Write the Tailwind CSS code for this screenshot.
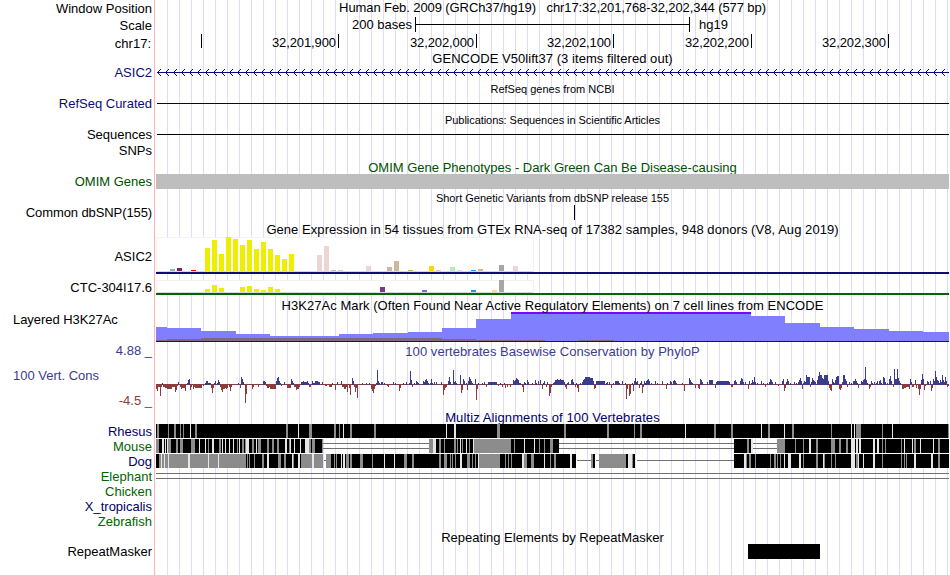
<!DOCTYPE html>
<html lang="en">
<head>
    <meta charset="UTF-8" />
    <meta name="viewport" content="width=device-width, initial-scale=1.0" />
    <title>Human chr17:32,201,768-32,202,344 Genome Browser</title>
    <script src="https://cdn.jsdelivr.net/npm/@tailwindcss/browser@4"></script>
</head>
<body class="bg-white text-black font-['Liberation_Sans',Arial,sans-serif] text-[13px] leading-4 overflow-hidden">
    <div class="flex w-[950px] h-[575px] overflow-hidden whitespace-pre">

        <!-- Track labels -->
        <div class="flex flex-col w-[155px] shrink-0 border-r border-[#ffb4b4] pt-px pr-[2px] text-right">
            <div>Window Position</div>
            <div class="mt-px">Scale</div>
            <div class="mt-[2px] pr-px">chr17:</div>
            <div class="mt-[13px] text-[#0c0c78]">ASIC2</div>
            <div class="mt-[15px] text-[#0c0c78]">RefSeq Curated</div>
            <div class="mt-[15px]">Sequences</div>
            <div>SNPs</div>
            <div class="mt-[15px] text-[#005000]">OMIM Genes</div>
            <div class="mt-[15px] tracking-[-0.1px]">Common dbSNP(155)</div>
            <div class="mt-[28px]">ASIC2</div>
            <div class="mt-[15px]">CTC-304I17.6</div>
            <div class="mt-[16px] pl-[13px] text-left tracking-[-0.05px]">Layered H3K27Ac</div>
            <div class="mt-[15px] text-[#3c3c8c]">4.88 _</div>
            <div class="mt-[9px] pl-[13px] text-left text-[#3c3c8c]">100 Vert. Cons</div>
            <div class="mt-[9px] text-[#8c3c3c]">-4.5 _</div>
            <div class="flex flex-col mt-[15px] leading-[15px]">
                <div class="text-[#000064]">Rhesus</div>
                <div class="text-[#006400]">Mouse</div>
                <div class="text-[#000064]">Dog</div>
                <div class="text-[#006400]">Elephant</div>
                <div class="text-[#006400]">Chicken</div>
                <div class="text-[#000064]">X_tropicalis</div>
                <div class="text-[#006400]">Zebrafish</div>
            </div>
            <div class="mt-[15px]">RepeatMasker</div>
        </div>

        <!-- Tracks, with a guide line every 12px -->
        <div class="flex flex-col w-[793px] ml-px shrink-0 text-center bg-[repeating-linear-gradient(to_right,transparent_0_11px,#dcdcff_11px_12px)]">
            <div class="h-4 tracking-[-0.09px]">Human Feb. 2009 (GRCh37/hg19)   chr17:32,201,768-32,202,344 (577 bp)</div>

            <!-- Scale -->
            <div class="flex h-[17px] pt-px text-left">
                <div class="w-[256px] text-right">200 bases</div>
                <div class="flex items-center w-[275px] h-[15px] ml-[3px] border-x border-black"><div class="w-full h-px bg-black"></div></div>
                <div class="ml-[9px]">hg19</div>
            </div>

            <!-- Ruler -->
            <div class="flex h-[18px] pt-px text-right leading-[18px] tracking-[-0.1px]">
                <div class="w-[46px] h-[14px] border-r border-black"></div>
                <div class="w-[137px] h-[14px] border-r border-black pr-[2px]">32,201,900</div>
                <div class="w-[138px] h-[14px] border-r border-black pr-[2px]">32,202,000</div>
                <div class="w-[137px] h-[14px] border-r border-black pr-[2px]">32,202,100</div>
                <div class="w-[138px] h-[14px] border-r border-black pr-[2px]">32,202,200</div>
                <div class="w-[137px] h-[14px] border-r border-black pr-[2px]">32,202,300</div>
            </div>

            <!-- GENCODE -->
            <div class="h-[15px] tracking-[0.05px]">GENCODE V50lift37 (3 items filtered out)</div>
            <svg class="h-[13px] w-[793px] shrink-0" viewBox="156 66 793 13" shape-rendering="crispEdges">
                <path id="chevrons" fill="#0c0c78" d="M157 72h792v1h-792z" />
            </svg>

            <!-- RefSeq -->
            <div class="mt-[2px] h-[22px] text-[11px]">RefSeq genes from NCBI</div>
            <div class="ml-px h-px shrink-0 bg-[#000050]"></div>

            <!-- Publications -->
            <div class="mt-2 h-[22px] text-[11px] tracking-[-0.06px]">Publications: Sequences in Scientific Articles</div>
            <div class="ml-px h-px shrink-0 bg-black"></div>

            <!-- OMIM -->
            <div class="mt-[25px] h-[14px] text-[#005000]">OMIM Gene Phenotypes - Dark Green Can Be Disease-causing</div>
            <div class="relative h-[15px] shrink-0 bg-[#bebebe]"></div>

            <!-- dbSNP -->
            <div class="mt-px h-[15px] text-[11px]">Short Genetic Variants from dbSNP release 155</div>
            <div class="ml-[418px] w-px h-[15px] shrink-0 bg-black"></div>

            <!-- GTEx -->
            <div class="mt-[2px] h-[15px] tracking-[0.055px]">Gene Expression in 54 tissues from GTEx RNA-seq of 17382 samples, 948 donors (V8, Aug 2019)</div>
            <svg id="gtex" class="h-[60px] w-[793px] shrink-0" viewBox="156 237 793 60" shape-rendering="crispEdges">
                <path fill="#fff" stroke="#f2f2f2" d="M156.5 237.5h377v34h-377zM156.5 280.5h377v12h-377z" />
                <path fill="#d9d9d9" d="M157 271h376v1h-376zM157 292h376v1h-376z" />
                <path fill="#0c0c78" d="M156 272h793v2h-793z" />
                <path fill="#006400" d="M156 293h793v2h-793z" />
            </svg>

            <!-- H3K27Ac -->
            <div class="relative mt-px h-[14px] tracking-[0.05px]">H3K27Ac Mark (Often Found Near Active Regulatory Elements) on 7 cell lines from ENCODE</div>
            <svg class="h-[32px] w-[793px] shrink-0" viewBox="156 312 793 32" shape-rendering="crispEdges">
                <path fill="#8080ff" d="M156 341V327H167V328H201V331H236V334H270V336H339V334H373V333H408V332H442V328H476V319H511V313H751V316H785V323H820V327H854V329H889V331H923V332H949V341z" />
                <path fill="#7f00ff" d="M511 312h240v2h-240z" />
                <path fill="#806680" d="M156 341V340H167V339H201V338H442V339H476V340H545V341zM579 340h35v1h-35z" />
                <path fill="#1c1450" d="M156 341h793v1h-793z" />
            </svg>

            <!-- Conservation -->
            <div class="h-4 text-[#3c3c8c] tracking-[0.05px]">100 vertebrates Basewise Conservation by PhyloP</div>
            <svg id="phylop" class="h-[50px] w-[793px] shrink-0" viewBox="156 360 793 50" shape-rendering="crispEdges"></svg>
            <div class="h-[14px] text-[#000064] tracking-[0.1px]">Multiz Alignments of 100 Vertebrates</div>
            <svg id="multiz" class="h-[60px] w-[793px] shrink-0" viewBox="156 424 793 60" shape-rendering="crispEdges"></svg>

            <!-- RepeatMasker -->
            <div class="mt-[46px] h-[14px]">Repeating Elements by RepeatMasker</div>
            <div class="ml-[592px] w-[72px] h-[15px] shrink-0 bg-black"></div>
        </div>
    </div>

    <script>
        function addPath(svg, fill, d) {
            const path = document.createElementNS('http://www.w3.org/2000/svg', 'path');
            path.setAttribute('fill', fill);
            path.setAttribute('d', d);
            svg.appendChild(path);
        }

        const rect = (x, y, w, h) => `M${x} ${y}h${w}v${h}h${-w}z`;

        // strand arrows on the gene line
        const chevrons = document.getElementById('chevrons');
        let arrows = chevrons.getAttribute('d');
        for (let x = 157; x < 946; x += 8) {
            arrows += rect(x + 1, 71, 1, 1) + rect(x + 2, 70, 1, 1) + rect(x + 3, 69, 1, 1);
            arrows += rect(x + 1, 73, 1, 1) + rect(x + 2, 74, 1, 1) + rect(x + 3, 75, 1, 1);
        }
        chevrons.setAttribute('d', arrows);

        // expression bars: x, top, colour
        const gtex = document.getElementById('gtex');
        const asic2 = [
            [170, 269, '#8fbc8f'], [177, 268, '#8b1c62'], [191, 270, '#ff0000'],
            [317, 255, '#eed5d2'], [324, 246, '#eed5d2'], [331, 270, '#cdb79e'], [338, 270, '#eec591'],
            [366, 266, '#eed5d2'], [387, 267, '#cdb79e'], [394, 261, '#cdb79e'], [408, 270, '#9acd32'],
            [429, 266, '#ffd700'], [436, 270, '#ffb6c1'], [450, 267, '#b4eeb4'], [457, 270, '#d9d9d9'],
            [471, 270, '#1e90ff'], [478, 269, '#cdb79e'], [499, 265, '#a6a6a6'], [513, 266, '#eed5d2']
        ];
        [248, 240, 254, 237, 239, 245, 240, 249, 242, 249, 255, 259, 254].forEach((top, i) => {
            asic2.push([205 + 7 * i, top, '#eeee00']);
        });
        const ctc = [
            [205, 289, '#eeee00'], [212, 285, '#eeee00'], [219, 288, '#eeee00'], [240, 287, '#eeee00'],
            [247, 286, '#eeee00'], [254, 289, '#eeee00'], [261, 290, '#eeee00'], [268, 287, '#eeee00'],
            [275, 289, '#eeee00'], [380, 287, '#7a378b'], [422, 290, '#7a67ee'], [471, 290, '#1e90ff'],
            [492, 290, '#ffd39b'], [499, 280, '#a6a6a6']
        ];
        asic2.forEach(([x, top, fill]) => addPath(gtex, fill, rect(x, top, 5, 271 - top)));
        ctc.forEach(([x, top, fill]) => addPath(gtex, fill, rect(x, top, 5, 292 - top)));

        // PhyloP scores as column:height or first-last:height
        const scores = `
            156:-5 157:-7 158-159:-3 160:-12 161:-3 162:2 163-164:-3 165-166:-4 167-171:-5 172-174:-3 175:-8 176:-6 177:-2 178:3
            180:-3 181:-5 182-184:-4 185:-7 187:2 188:5 189:6 190:-6 191:-3 193:-5 194:-3 195-201:-4 203:-2 205:2 206-207:4 208-210:2
            211:-4 212:-9 213:-4 214:2 215:4 217:2 218:5 219:3 220:-3 221:-6 222:-8 223-224:-5 225:-4 226:-5 227:-4 229:-3 230:-7 231:-3
            238:2 240:-4 241:8 242:6 243:3 245:-19 246:-10 252:-5 253:-3 258:-3 263-264:4 265:3 266:-2 267-268:-4 269:-3 270-275:-5
            276:4 277:7 278:8 279:4 280:2 281:-2 284:3 287-290:-4 291:6 292:4 293:2 294:-3 295:-3 296:-6 297-298:-5 299:-3
            301-302:3 303:4 304-306:3 307:4 308:2 309:-3 310:-3 312:4 313:2 314:2 315-317:4 318-319:3 322:3 325-326:-2 329-331:-3
            332:2 335:-6 337:3 341:4 342-343:-3 344-345:-5 346:-3 347:-8 349:-4 350:-11 352:7 353:4 354:-3 355:-8 356:-4 357:-14
            362:2 366:2 369:2 371:-5 372:-7 373:-9 374:-5 375:-2 376:2 377:15 378:4 379:2 381:3 382:3 384:2 387:-2 388:-3 393:3
            395:2 399:-7 400:-4 403:2 406:3 409:2 410:14 411:5 412:-3 414:2 416:4 417:3 418:2 423:4 424:3 425:5 426:6 427:4 428:2
            430-432:2 431:6 434:3 436:3 441:3 443:-11 444:-6 445:-4 446:-3 448:4 449:8 450:3 453:15 454:3 455:4 456:2 460:10
            461:-9 462:-6 463:6 464:4 466:2 467:-6 468:4 469:8 470:6 471:4 472:2 475:6 476:-16 477:-5 478:2 482:2 484:3 486:-3
            488-496:3 498:-2 500:2 502:-3 504:2 505:-4 507:-3 510:-3 513:5 514:4 515:5 516:7 517:6 518:5 519:2 520:2 522:-3
            523:-8 524:3 525:2 527:5 528:3 532:2 535:5 536:2 538:4 540:5 542:-5 543:2 544:4 546:-3 547:3 549:-12 550:-9 551:-3
            553:2 554:3 555-563:5 557:6 560:6 564:3 565:-3 566:-5 567:2 568:3 571:5 572:6 573:3 575:-3 576:2 577:-4 578:-8
            580:2 582:3 583:5 584:6 585-589:8 590-592:7 593:4 594:-5 595:-4 596-604:4 606:2 607:3 609:3 611:-4 613:2
            615-618:4 619:2 622:4 625:2 626:-15 627:-5 629:-12 630:-10 632:2 633:-7 634:4 635:7 636:3 637:4 639:-4 640:2
            641:4 642:-9 643:-3 644:4 645:2 646:4 647:5 648:6 649:4 651:2 655:4 657:2 662:4 666:-5 667:2 670:4 671:3 673:4
            674:5 675:4 676:2 682:2 684:-7 689:7 690:5 691:3 692:2 695:-4 698:-4 699:-5 700:6 701:5 702:3 707:3 709-712:5
            715:-4 716:3 717-728:4 729:3 731-732:-3 734:4 735:5 736:3 740:4 741:7 742:6 743:3 745:3 748:-5 749:4 751:2
            752:5 753:3 754:8 755:3 757:2 761:4 763:2 765:-3 767:2 769:3 770:6 771:5 772:3 775:3 778:-2 782:4 783:6 784:-7
            785:-4 786:3 787:6 788:4 790:2 794:3 796:2 798:3 799:5 800:7 801:4 802:-5 803:2 804:4 805:3 806:10 807:8
            808-809:8 810:-3 811:3 812:7 813:5 814:4 815:3 817:5 818:9 819:13 820:10 821:10 822:7 823:6 824:10 825-827:10
            828:4 829:-4 830:-6 831:-7 832:6 833:3 834:2 835:5 836:8 837:9 838:9 839:-5 840:-6 841:-4 842:3 843:10 844:10
            845:6 846:4 847:-3 849:3 851:2 853:4 854:4 855:6 856:4 857:2 858:-4 861:4 862:3 863:5 864:6 865:18 866:5 867:2
            869:-5 870:-3 871:4 872:2 874:3 876:2 877:4 879:4 880:5 881:2 883:8 884:7 885:3 887:2 889:6 890:9 891:4 893:-3
            894:16 895:6 896:6 897:16 898:7 899:4 900:2 902-903:-5 904:-4 905:-4 906-908:-3 909:-5 910:6 911:3 912-913:-3
            915:5 916:-4 918:-5 919:-11 920:-5 921:5 922:11 923:6 924:-6 925:-2 927:4 928:3 930:4 931:-7 932:-4 933:6 934:4
            935:14 936:8 937:5 938:4 939:2 940:5 941:3 942:10 943:5 944:3 945:8 946:4 947:-3 948:-2`;
        const phylop = document.getElementById('phylop');
        let up = '';
        let down = rect(156, 384, 793, 1);
        scores.trim().split(/\s+/).forEach(item => {
            const [, first, last, value] = item.match(/^(\d+)(?:-(\d+))?:(-?\d+)$/);
            const w = last ? last - first + 1 : 1;
            const v = Number(value);
            if (v > 0) up += rect(first, 385 - v, w, v);
            else down += rect(first, 384, w, -v);
        });
        addPath(phylop, '#8c3c3c', down);
        addPath(phylop, '#3c3c8c', up);

        // alignment blocks: each list holds column or column+width
        const species = [
            {
                y: 424,
                black: '156+793',
                gray: '157+2 168 174+2 180 183 195+2 286+2 309+3 334+2 339 350+2 374+2 497+3 564+2 607+2 634 640+2 714+2 731+2 768+2 792+2 831 856+5 882 948',
                light: '190 298 343 446 454+2 685 761 784 851 854 892'
            },
            {
                y: 439,
                black: '156+167 429+130 734+19 777+172',
                gray: '156+3 168+3 176+2 180+3 191+4 208 219+2 237 242+2 245 252+2 258+3 267+2 272+2 277+2 289 309+2 312+3 322 429+4 439+2 444 454+2 457 462 469 474+37 514 539 544 550+3 747+2 777+8 795 803 816+2 831+4 839+2 846+2 882 885 901 914+2 938+2',
                light: '162+2 165 167 199 205 212+2 222 225 229 233 239 246+3 256 285+2 290 294 300 305+4 433+3 460 466 473 524 534 751+2 809+2 851+4 856+2 859+2 873+2 877+2 904 912 920 933'
            },
            {
                y: 454,
                black: '156+167 326+250 591+4 599+37 734+215',
                gray: '159+87 247 249 254 262+2 278+3 284+2 293 301+22 326+5 334 336 346+3 350+2 360+3 372 404+3 412+2 439+2 444+3 450 452 455 467+3 472 475 479+21 505 508 511 524+3 531+3 550 554+2 591+2 599+27 632 746 749+2 755 770 774+2 777 780 803 816+2 824 831 835 856+2 882 901 904 906 938+2',
                light: '161 164 168 188+2 208 218 267+2 292 298+2 312+2 341 343+2 384 394 460+2 478 522+2 544 570+2 628+4 635 744+2 784 788+3 799+2 823 851+4 858 863 873+2 914+2 931+2'
            }
        ];
        const multiz = document.getElementById('multiz');
        addPath(multiz, '#707070', [
            rect(323, 443, 106, 1), rect(323, 448, 106, 1), rect(559, 443, 175, 1), rect(559, 448, 175, 1),
            rect(753, 443, 24, 1), rect(753, 448, 24, 1),
            rect(324, 460, 2, 1), rect(577, 460, 14, 1), rect(596, 460, 3, 1), rect(637, 460, 97, 1),
            rect(156, 473, 793, 1), rect(156, 478, 793, 1)
        ].join(''));
        addPath(multiz, '#ffffff', rect(156, 438, 167, 1) + rect(156, 453, 167, 1) + rect(777, 453, 172, 1));
        const blocks = (list, y) => list.split(' ').map(item => {
            const [x, w = 1] = item.split('+').map(Number);
            return rect(x, y, w, 14);
        }).join('');
        species.forEach(({ y, black, gray, light }) => {
            addPath(multiz, '#000000', blocks(black, y));
            addPath(multiz, '#8c8c8c', blocks(gray, y));
            addPath(multiz, '#e6e6e6', blocks(light, y));
        });
    </script>
</body>
</html>
